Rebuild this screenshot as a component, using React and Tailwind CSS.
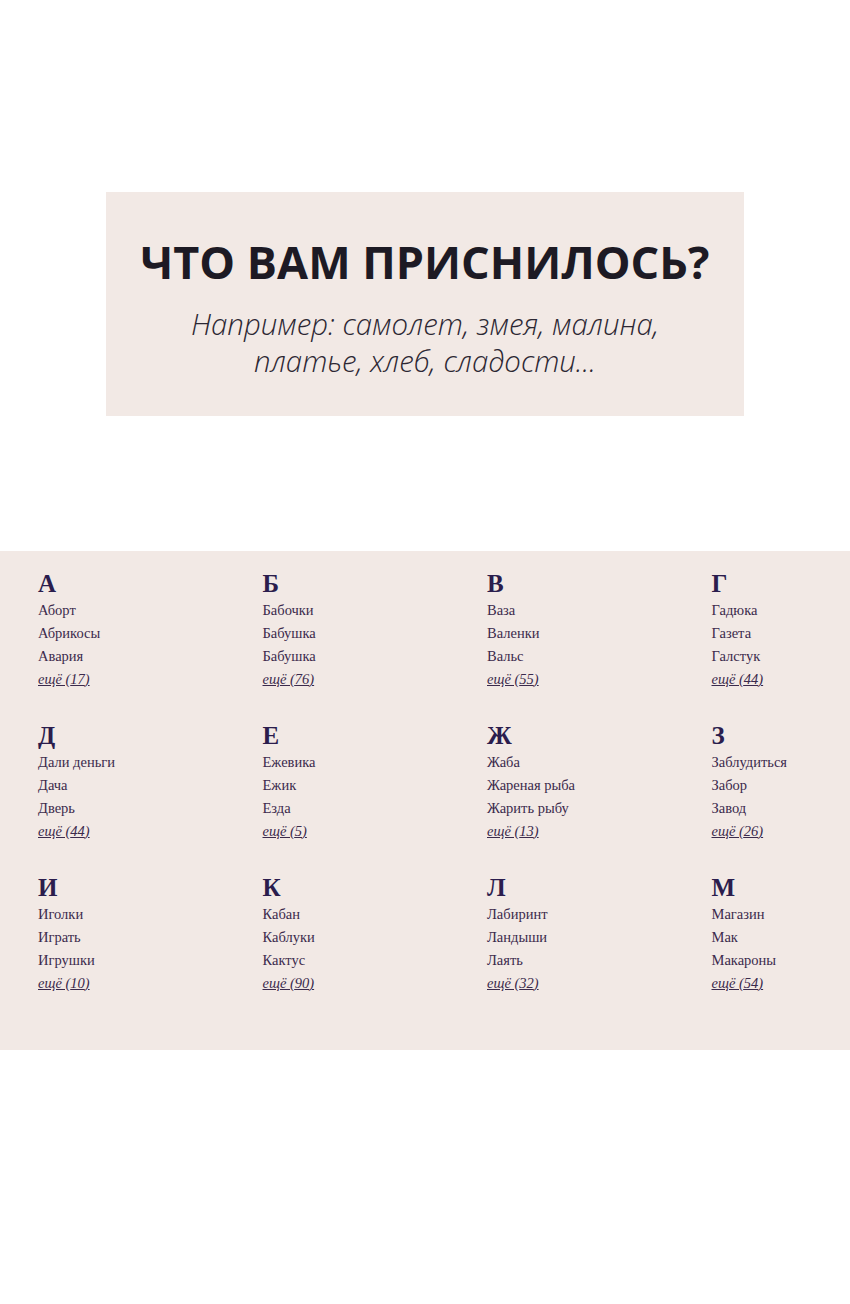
import React from 'react';

const groups = [
    { letter: 'А', words: ['Аборт', 'Абрикосы', 'Авария'], more: 17 },
    { letter: 'Б', words: ['Бабочки', 'Бабушка', 'Бабушка'], more: 76 },
    { letter: 'В', words: ['Ваза', 'Валенки', 'Вальс'], more: 55 },
    { letter: 'Г', words: ['Гадюка', 'Газета', 'Галстук'], more: 44 },
    { letter: 'Д', words: ['Дали деньги', 'Дача', 'Дверь'], more: 44 },
    { letter: 'Е', words: ['Ежевика', 'Ежик', 'Езда'], more: 5 },
    { letter: 'Ж', words: ['Жаба', 'Жареная рыба', 'Жарить рыбу'], more: 13 },
    { letter: 'З', words: ['Заблудиться', 'Забор', 'Завод'], more: 26 },
    { letter: 'И', words: ['Иголки', 'Играть', 'Игрушки'], more: 10 },
    { letter: 'К', words: ['Кабан', 'Каблуки', 'Кактус'], more: 90 },
    { letter: 'Л', words: ['Лабиринт', 'Ландыши', 'Лаять'], more: 32 },
    { letter: 'М', words: ['Магазин', 'Мак', 'Макароны'], more: 54 },
];

export default function App() {
    return (
        <div className="min-h-[1304px] bg-white">
            <div className="h-[192px]" />

            {/* Поиск сна */}
            <div className="mx-auto w-[638px] bg-[#f2e9e5] pt-[42px] pb-[36px] text-center">
                <h1 className="font-['Open_Sans',sans-serif] text-[45px] leading-[55px] font-bold text-[#1d1a24]">
                    ЧТО ВАМ ПРИСНИЛОСЬ?
                </h1>
                <p className="mt-[17px] font-['Open_Sans',sans-serif] text-[29.4px] leading-[37px] font-light italic text-[#2c2733]">
                    Например: самолет, змея, малина,
                    <br />
                    платье, хлеб, сладости...
                </p>
            </div>

            <div className="h-[135px]" />

            {/* Алфавит */}
            <div className="overflow-hidden bg-[#f2e9e5] pt-[18px] pb-[55px] pl-[38px] font-['Liberation_Serif',serif]">
                <div className="grid grid-cols-[repeat(4,224.5px)] gap-y-[30px]">
                    {groups.map((g) => (
                        <div key={g.letter}>
                            <div className="text-[25px] leading-[30px] font-bold text-[#2b1d4d]">{g.letter}</div>
                            {g.words.map((w, i) => (
                                <div key={i} className="text-[14.5px] leading-[23px] text-[#3b2a4c]">{w}</div>
                            ))}
                            <a href="#" className="block w-fit text-[14.5px] leading-[23px] italic underline text-[#3b2a4c]">
                                ещё ({g.more})
                            </a>
                        </div>
                    ))}
                </div>
            </div>
        </div>
    );
}
